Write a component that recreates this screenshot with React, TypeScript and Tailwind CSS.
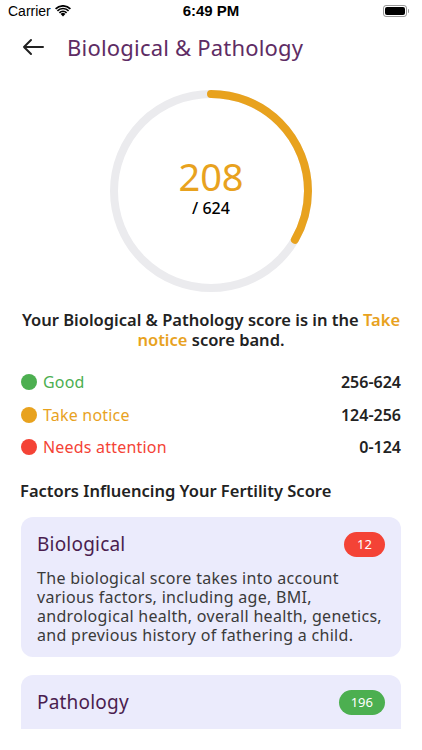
const bands = [
  { label: "Good", range: "256-624", dot: "bg-[#4caf50]", text: "text-[#4caf50]" },
  { label: "Take notice", range: "124-256", dot: "bg-[#e8a21e]", text: "text-[#e8a21e]" },
  { label: "Needs attention", range: "0-124", dot: "bg-[#f44336]", text: "text-[#f44336]" },
] as const;

const factors = [
  {
    title: "Biological",
    score: "12",
    badge: "bg-[#f44336]",
    body: "The biological score takes into account various factors, including age, BMI, andrological health, overall health, genetics, and previous history of fathering a child.",
  },
  {
    title: "Pathology",
    score: "196",
    badge: "bg-[#4caf50]",
    body: "The pathology score reflects the results of your semen analysis and other laboratory tests.",
  },
] as const;

function StatusBar() {
  return (
    <div className="relative flex h-[22px] items-center justify-between px-2 text-black">
      <div className="flex items-center gap-1 font-['Liberation_Sans',sans-serif] text-[14px]">
        Carrier
        <svg width="16" height="12" viewBox="0 0 16 12" fill="black">
          <path d="M8 11.5 5.6 9a3.4 3.4 0 0 1 4.8 0z" />
          <path d="M3.8 7.2a6 6 0 0 1 8.4 0l-1.2 1.2a4.3 4.3 0 0 0-6 0z" />
          <path d="M1.8 5.2a8.8 8.8 0 0 1 12.4 0L13 6.4a7.1 7.1 0 0 0-10 0z" />
          <path d="M0 3.3a11.3 11.3 0 0 1 16 0l-1.2 1.2a9.6 9.6 0 0 0-13.6 0z" />
        </svg>
      </div>
      <div className="absolute left-1/2 -translate-x-1/2 font-['Liberation_Sans',sans-serif] text-[15px] font-bold">
        6:49 PM
      </div>
      <div className="flex items-center pr-[5px]">
        <div className="flex h-[12px] w-[24px] items-center rounded-[3px] border border-black/40 p-[1px]">
          <div className="h-full w-full rounded-[2px] bg-black" />
        </div>
        <div className="ml-[1px] h-[4px] w-[1.5px] rounded-r bg-black/40" />
      </div>
    </div>
  );
}

// ring is drawn from 12 o'clock clockwise, so rotate the svg a quarter turn back
function ScoreRing({ score, max }: { score: number; max: number }) {
  const r = 97;
  const c = 2 * Math.PI * r;
  const filled = (score / max) * c;
  return (
    <div className="relative mx-auto h-[202px] w-[202px]">
      <svg width="202" height="202" viewBox="0 0 202 202" className="-rotate-90">
        <circle cx="101" cy="101" r={r} fill="none" stroke="#ebebee" strokeWidth="8" />
        <circle
          cx="101"
          cy="101"
          r={r}
          fill="none"
          stroke="#e8a21e"
          strokeWidth="8"
          strokeLinecap="round"
          strokeDasharray={`${filled} ${c}`}
        />
      </svg>
      <div className="absolute inset-0 flex flex-col items-center justify-center pb-[8px]">
        <span className="text-[38px] leading-[40px] text-[#e8a21e]">{score}</span>
        <span className="mt-[2px] text-[16px] leading-[20px] font-medium text-black">/ {max}</span>
      </div>
    </div>
  );
}

export default function App() {
  return (
    <div className="h-[750px] w-[422px] overflow-hidden bg-white font-['Noto_Sans',sans-serif]">
      <StatusBar />
      <div className="h-[707px] overflow-hidden">
        <div className="flex h-[50px] items-center">
          <svg width="22" height="18" viewBox="0 0 22 18" className="ml-[22px]" fill="none" stroke="#222" strokeWidth="2" strokeLinecap="round" strokeLinejoin="round">
            <path d="M21 9H2M9 2 2 9l7 7" />
          </svg>
          <h1 className="ml-[23px] text-[22px] tracking-[0.2px] text-[#5e2c64]">Biological &amp; Pathology</h1>
        </div>

        <div className="mt-[18px]">
          <ScoreRing score={208} max={624} />
        </div>

        <p className="mx-auto mt-[18px] w-[390px] text-center text-[16.5px] leading-[20px] font-semibold text-[#222]">
          Your Biological &amp; Pathology score is in the{" "}
          <span className="text-[#e8a21e]">Take notice</span> score band.
        </p>

        <ul className="mt-[22px] flex flex-col gap-[12.5px] px-[21px]">
          {bands.map((b) => (
            <li key={b.label} className="flex h-[20px] items-center justify-between">
              <div className="flex items-center gap-[6px]">
                <span className={`h-[16px] w-[16px] rounded-full ${b.dot}`} />
                <span className={`text-[16px] tracking-[0.2px] ${b.text}`}>{b.label}</span>
              </div>
              <span className="text-[16px] font-semibold text-[#222]">{b.range}</span>
            </li>
          ))}
        </ul>

        <h2 className="mt-[22px] px-[20px] text-[16.5px] leading-[24px] font-semibold text-[#222]">
          Factors Influencing Your Fertility Score
        </h2>

        <div className="mt-[14px] flex flex-col gap-[18px] px-[21px]">
          {factors.map((f) => (
            <div key={f.title} className="rounded-[12px] bg-[#ebebfc] pt-[15px] pr-[16px] pb-[12.5px] pl-[16px]">
              <div className="flex h-[25px] items-center justify-between">
                <h3 className="text-[19px] tracking-[0.2px] text-[#4a1d4f]">{f.title}</h3>
                <span className={`flex h-[25px] min-w-[41px] items-center justify-center rounded-full px-[12px] text-[13px] text-white ${f.badge}`}>
                  {f.score}
                </span>
              </div>
              <p className="mt-[11.5px] text-[16px] leading-[19px] tracking-[0.3px] text-[#3a3a3a]">{f.body}</p>
            </div>
          ))}
        </div>
      </div>
    </div>
  );
}
